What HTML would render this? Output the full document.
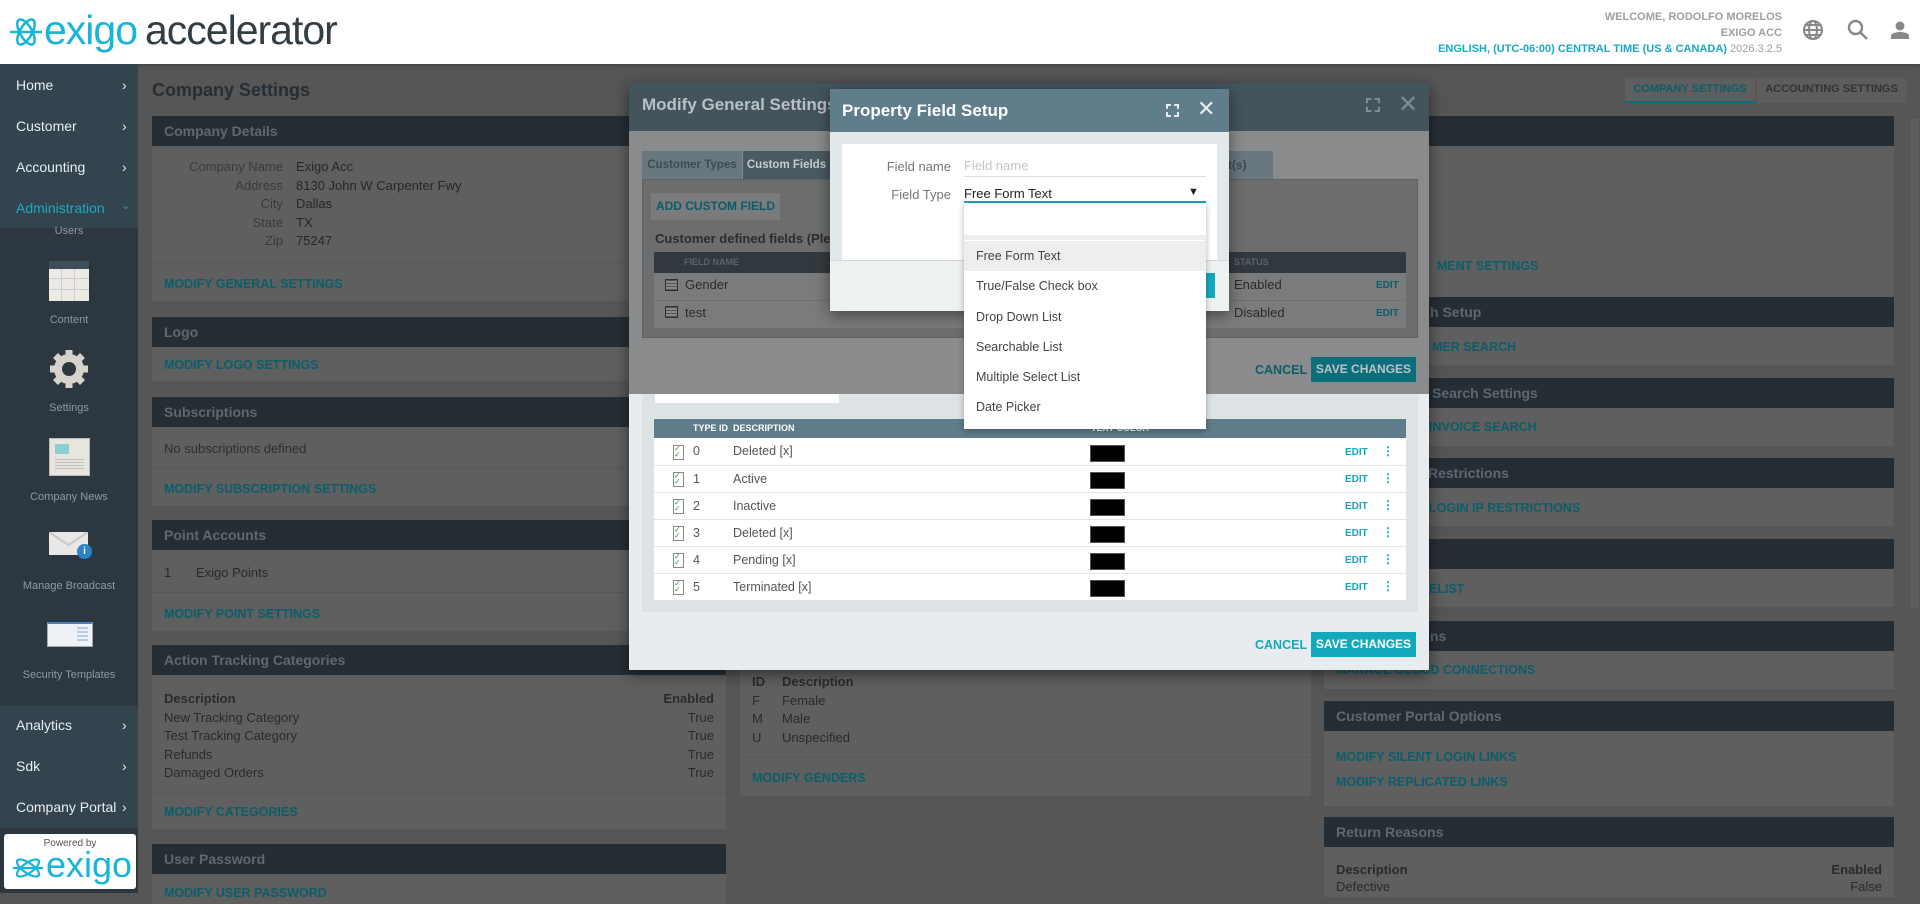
<!DOCTYPE html><html><head><meta charset="utf-8"><style>
*{box-sizing:border-box;margin:0;padding:0}
body{width:1920px;height:893px;overflow:hidden;position:relative;background:#565656;font-family:"Liberation Sans",sans-serif;font-size:13px;color:#2a2a2a}
.a{position:absolute}
.hdr{background:#262e35;color:#5d6870;font-size:14px;font-weight:bold;padding-left:12px;display:flex;align-items:center}
.pb{background:#5f5f5f}
.lk{color:#0b5e6a;font-weight:bold;font-size:12.5px}
.nav{color:#e8eef0;font-size:14px}
.sl{color:#8f9aa0;font-size:11px;text-align:center;width:138px;left:0}
.rowt td{height:27px;border-bottom:1px solid #e2e6e8;font-size:12.5px;color:#555}
</style></head><body>
<!-- header -->
<div class="a" style="left:0;top:0;width:1920px;height:64px;background:#fff;box-shadow:0 1px 3px rgba(0,0,0,.3)"></div>
<svg class="a" style="left:8px;top:14px" width="36" height="36" viewBox="0 0 36 36"><g fill="none" stroke="#19b5d8" stroke-width="2.5"><ellipse cx="18" cy="18" rx="14" ry="6" transform="rotate(60 18 18)"/><ellipse cx="18" cy="18" rx="14" ry="6" transform="rotate(-60 18 18)"/><path d="M2 18h32"/></g></svg>
<div class="a" style="left:44px;top:7px;font-size:41px;color:#19b5d8;letter-spacing:-1px">exigo</div>
<div class="a" style="left:145px;top:7px;font-size:41px;color:#333d44;letter-spacing:-1px">accelerator</div>
<div class="a" style="right:138px;top:9px;text-align:right;font-size:11px;font-weight:bold;color:#9aa0a4;line-height:16px">WELCOME, RODOLFO MORELOS<br>EXIGO ACC<br><span style="color:#19a7c4">ENGLISH, (UTC-06:00) CENTRAL TIME (US &amp; CANADA)</span> <span style="font-weight:normal">2026.3.2.5</span></div>
<svg class="a" style="left:1802px;top:19px" width="22" height="22" viewBox="0 0 22 22"><g fill="none" stroke="#888" stroke-width="2"><circle cx="11" cy="11" r="9"/><ellipse cx="11" cy="11" rx="4" ry="9"/><path d="M2 11h18M4 6h14M4 16h14"/></g></svg>
<svg class="a" style="left:1847px;top:19px" width="22" height="22" viewBox="0 0 22 22"><g fill="none" stroke="#888" stroke-width="2.4"><circle cx="8.5" cy="8.5" r="6.5"/><path d="M13 13l7 7"/></g></svg>
<svg class="a" style="left:1890px;top:20px" width="20" height="20" viewBox="0 0 20 20"><circle cx="10" cy="6" r="4.5" fill="#888"/><path d="M1 19v-3c0-3 6-4 9-4s9 1 9 4v3z" fill="#888"/></svg>

<!-- sidebar -->
<div class="a" style="left:0;top:64px;width:138px;height:829px;background:#2c3740"></div>
<div class="a" style="left:0;top:64px;width:138px;height:164px;background:#34444e"></div>
<div class="a" style="left:0;top:706px;width:138px;height:122px;background:#34444e"></div>
<div class="a nav" style="left:16px;top:77px">Home</div><div class="a nav" style="left:122px;top:77px">›</div>
<div class="a nav" style="left:16px;top:118px">Customer</div><div class="a nav" style="left:122px;top:118px">›</div>
<div class="a nav" style="left:16px;top:159px">Accounting</div><div class="a nav" style="left:122px;top:159px">›</div>
<div class="a nav" style="left:16px;top:200px;color:#1aa9c2">Administration</div><div class="a nav" style="left:121px;top:199px;color:#1aa9c2;font-size:11px">⌄</div>
<div class="a sl" style="top:225px">Users</div>
<div class="a" style="left:49px;top:261px;width:40px;height:40px;background:#eceae4;border-top:8px solid #3f4f5a;background-image:linear-gradient(90deg,transparent 12px,#cfccc4 12px,#cfccc4 13px,transparent 13px,transparent 25px,#cfccc4 25px,#cfccc4 26px,transparent 26px),linear-gradient(transparent 9px,#cfccc4 9px,#cfccc4 10px,transparent 10px,transparent 20px,#cfccc4 20px,#cfccc4 21px,transparent 21px)"></div>
<div class="a sl" style="top:314px">Content</div>
<svg class="a" style="left:47px;top:347px" width="44" height="44" viewBox="0 0 44 44"><g fill="#d6d3cc"><circle cx="22" cy="22" r="15"/><g stroke="#d6d3cc" stroke-width="7"><path d="M22 3v38M3 22h38M8.5 8.5l27 27M35.5 8.5l-27 27"/></g></g><circle cx="22" cy="22" r="7" fill="#2c3740"/></svg>
<div class="a sl" style="top:402px">Settings</div>
<div class="a" style="left:49px;top:438px;width:41px;height:38px;background:#e8e5de;border:1px solid #bbb"><div style="margin:5px;width:14px;height:10px;background:#8ccfd0"></div><div style="margin:0 5px;height:12px;background:repeating-linear-gradient(#c2c0ba 0 1px,transparent 1px 3px)"></div></div>
<div class="a sl" style="top:491px">Company News</div>
<div class="a" style="left:49px;top:532px;width:39px;height:23px;background:#e8e8e8"></div>
<svg class="a" style="left:49px;top:532px" width="39" height="23"><path d="M0 0l19.5 13L39 0" fill="none" stroke="#c8c8c8" stroke-width="2"/></svg>
<div class="a" style="left:77px;top:544px;width:15px;height:15px;border-radius:50%;background:#2b82c8;color:#fff;font-size:10px;font-weight:bold;text-align:center;line-height:15px">i</div>
<div class="a sl" style="top:580px">Manage Broadcast</div>
<div class="a" style="left:47px;top:622px;width:46px;height:25px;background:#eef1f5;border:1px solid #aaa;border-top:2px solid #4a7fc0"><div style="position:absolute;right:4px;top:3px;width:11px;height:16px;background:repeating-linear-gradient(#b5cce3 0 2px,transparent 2px 4px)"></div></div>
<div class="a sl" style="top:669px">Security Templates</div>
<div class="a nav" style="left:16px;top:717px">Analytics</div><div class="a nav" style="left:122px;top:717px">›</div>
<div class="a nav" style="left:16px;top:758px">Sdk</div><div class="a nav" style="left:122px;top:758px">›</div>
<div class="a nav" style="left:16px;top:799px">Company Portal</div><div class="a nav" style="left:122px;top:799px">›</div>
<div class="a" style="left:4px;top:834px;width:132px;height:55px;background:#fff;border-radius:3px"></div>
<div class="a" style="left:4px;top:838px;width:132px;text-align:center;font-size:10px;color:#555">Powered by</div>
<svg class="a" style="left:12px;top:854px" width="32" height="28" viewBox="0 0 32 28"><g fill="none" stroke="#19b5d8" stroke-width="2.2"><ellipse cx="16" cy="14" rx="13" ry="5" transform="rotate(35 16 14)"/><ellipse cx="16" cy="14" rx="13" ry="5" transform="rotate(-35 16 14)"/><path d="M1 14h30"/></g></svg>
<div class="a" style="left:46px;top:845px;font-size:36px;color:#19b5d8;line-height:40px">exigo</div>

<!-- main title -->
<div class="a" style="left:152px;top:80px;font-size:18px;font-weight:bold;color:#262e35">Company Settings</div>
<div class="a" style="left:1625px;top:78px;width:130px;height:25px;background:#5e5e5e;border-bottom:2px solid #0b6e7a;color:#0b5e6a;font-size:11px;font-weight:bold;text-align:center;line-height:23px">COMPANY SETTINGS</div>
<div class="a" style="left:1757px;top:78px;width:149px;height:25px;background:#5d5d5d;color:#2e3438;font-size:11px;font-weight:bold;text-align:center;line-height:23px">ACCOUNTING SETTINGS</div>
<div class="a" style="left:1910px;top:116px;width:10px;height:777px;background:#555"></div>
<div class="a" style="left:1911px;top:118px;width:8px;height:490px;background:#5e5e5e"></div>

<!-- left column -->
<div class="a pb" style="left:152px;top:116px;width:574px;height:185px"></div>
<div class="a hdr" style="left:152px;top:116px;width:574px;height:30px">Company Details</div>
<div class="a" style="left:152px;top:158px;width:131px;text-align:right;color:#3a3a3a;line-height:18.5px">Company Name<br>Address<br>City<br>State<br>Zip</div>
<div class="a" style="left:296px;top:158px;color:#262626;line-height:18.5px">Exigo Acc<br>8130 John W Carpenter Fwy<br>Dallas<br>TX<br>75247</div>
<div class="a" style="left:152px;top:262px;width:574px;height:1px;background:#585858"></div>
<div class="a lk" style="left:164px;top:277px">MODIFY GENERAL SETTINGS</div>

<div class="a pb" style="left:152px;top:317px;width:574px;height:64px"></div>
<div class="a hdr" style="left:152px;top:317px;width:574px;height:30px">Logo</div>
<div class="a lk" style="left:164px;top:358px">MODIFY LOGO SETTINGS</div>

<div class="a pb" style="left:152px;top:397px;width:574px;height:109px"></div>
<div class="a hdr" style="left:152px;top:397px;width:574px;height:30px">Subscriptions</div>
<div class="a" style="left:164px;top:441px;color:#2e2e2e">No subscriptions defined</div>
<div class="a" style="left:152px;top:468px;width:574px;height:1px;background:#585858"></div>
<div class="a lk" style="left:164px;top:482px">MODIFY SUBSCRIPTION SETTINGS</div>

<div class="a pb" style="left:152px;top:520px;width:574px;height:111px"></div>
<div class="a hdr" style="left:152px;top:520px;width:574px;height:30px">Point Accounts</div>
<div class="a" style="left:164px;top:565px">1</div><div class="a" style="left:196px;top:565px">Exigo Points</div>
<div class="a" style="left:152px;top:592px;width:574px;height:1px;background:#585858"></div>
<div class="a lk" style="left:164px;top:607px">MODIFY POINT SETTINGS</div>

<div class="a pb" style="left:152px;top:645px;width:574px;height:184px"></div>
<div class="a hdr" style="left:152px;top:645px;width:574px;height:30px">Action Tracking Categories</div>
<div class="a" style="left:164px;top:690px;line-height:18.5px;color:#2a2a2a"><b>Description</b><br>New Tracking Category<br>Test Tracking Category<br>Refunds<br>Damaged Orders</div>
<div class="a" style="left:600px;width:114px;top:690px;line-height:18.5px;text-align:right"><b>Enabled</b><br>True<br>True<br>True<br>True</div>
<div class="a" style="left:152px;top:793px;width:574px;height:1px;background:#585858"></div>
<div class="a lk" style="left:164px;top:805px">MODIFY CATEGORIES</div>

<div class="a pb" style="left:152px;top:844px;width:574px;height:60px"></div>
<div class="a hdr" style="left:152px;top:844px;width:574px;height:30px">User Password</div>
<div class="a lk" style="left:164px;top:886px">MODIFY USER PASSWORD</div>

<!-- middle column -->
<div class="a pb" style="left:740px;top:116px;width:571px;height:680px"></div>
<div class="a" style="left:752px;top:673px;line-height:18.5px"><b>ID</b><br>F<br>M<br>U</div>
<div class="a" style="left:782px;top:673px;line-height:18.5px"><b>Description</b><br>Female<br>Male<br>Unspecified</div>
<div class="a" style="left:740px;top:757px;width:571px;height:1px;background:#585858"></div>
<div class="a lk" style="left:752px;top:771px">MODIFY GENDERS</div>

<!-- right column -->
<div class="a pb" style="left:1324px;top:116px;width:570px;height:193px"></div>
<div class="a hdr" style="left:1324px;top:116px;width:570px;height:30px"></div>
<div class="a lk" style="left:1437px;top:259px">MENT SETTINGS</div>
<div class="a pb" style="left:1324px;top:297px;width:570px;height:68px"></div>
<div class="a hdr" style="left:1324px;top:297px;width:570px;height:30px;padding-left:106px">h Setup</div>
<div class="a lk" style="left:1432px;top:340px">MER SEARCH</div>
<div class="a pb" style="left:1324px;top:378px;width:570px;height:68px"></div>
<div class="a hdr" style="left:1324px;top:378px;width:570px;height:30px;padding-left:108px">Search Settings</div>
<div class="a lk" style="left:1429px;top:420px">INVOICE SEARCH</div>
<div class="a pb" style="left:1324px;top:458px;width:570px;height:68px"></div>
<div class="a hdr" style="left:1324px;top:458px;width:570px;height:30px;padding-left:104px">Restrictions</div>
<div class="a lk" style="left:1429px;top:501px">LOGIN IP RESTRICTIONS</div>
<div class="a pb" style="left:1324px;top:539px;width:570px;height:68px"></div>
<div class="a hdr" style="left:1324px;top:539px;width:570px;height:30px"></div>
<div class="a lk" style="left:1429px;top:582px">ELIST</div>
<div class="a pb" style="left:1324px;top:621px;width:570px;height:68px"></div>
<div class="a hdr" style="left:1324px;top:621px;width:570px;height:30px;padding-left:106px">ns</div>
<div class="a lk" style="left:1336px;top:663px">MANAGE CLOUD CONNECTIONS</div>
<div class="a pb" style="left:1324px;top:701px;width:570px;height:105px"></div>
<div class="a hdr" style="left:1324px;top:701px;width:570px;height:30px">Customer Portal Options</div>
<div class="a lk" style="left:1336px;top:750px">MODIFY SILENT LOGIN LINKS</div>
<div class="a lk" style="left:1336px;top:775px">MODIFY REPLICATED LINKS</div>
<div class="a pb" style="left:1324px;top:817px;width:570px;height:80px"></div>
<div class="a hdr" style="left:1324px;top:817px;width:570px;height:30px">Return Reasons</div>
<div class="a" style="left:1336px;top:861px;line-height:17px"><b>Description</b><br>Defective</div>
<div class="a" style="left:1780px;width:102px;top:861px;line-height:17px;text-align:right"><b>Enabled</b><br>False</div>

<!-- modal 1 -->
<div class="a" style="left:629px;top:83px;width:800px;height:587px;background:#e9ecee;box-shadow:0 4px 14px rgba(0,0,0,.5)"></div>
<div class="a" style="left:629px;top:83px;width:800px;height:311px;background:#8a8b8c"></div>
<div class="a" style="left:629px;top:83px;width:800px;height:48px;background:#43545c"></div>
<div class="a" style="left:642px;top:95px;font-size:17px;font-weight:bold;color:#b9c1c5">Modify General Settings</div>
<div class="a" style="left:1366px;top:98px;width:14px;height:14px;border:2px dashed #7e8c92"></div>
<div class="a" style="left:1398px;top:90px;font-size:24px;color:#7e8c92">✕</div>
<div class="a" style="left:642px;top:151px;width:100px;height:28px;background:#69777e;color:#3d4c54;font-size:11.5px;font-weight:bold;text-align:center;line-height:28px">Customer Types</div>
<div class="a" style="left:743px;top:151px;width:87px;height:28px;background:#4a5a62;color:#c6cdd0;font-size:11.5px;font-weight:bold;text-align:center;line-height:28px">Custom Fields</div>
<div class="a" style="left:1200px;top:151px;width:73px;height:28px;background:#69777e;color:#3d4c54;font-size:12px;font-weight:bold;line-height:28px;padding-left:10px">oint(s)</div>
<div class="a" style="left:642px;top:179px;width:776px;height:159px;background:#6c6d6e;border:1px solid #5f6162"></div>
<div class="a" style="left:651px;top:193px;width:129px;height:27px;background:#7a7b7c;color:#0b5d69;font-size:12px;font-weight:bold;text-align:center;line-height:27px">ADD CUSTOM FIELD</div>
<div class="a" style="left:655px;top:231px;font-weight:bold;color:#2c2c2c">Customer defined fields (Pleas</div>
<div class="a" style="left:654px;top:252px;width:752px;height:21px;background:#32393e;color:#5a6369;font-size:9px;font-weight:bold;line-height:21px;padding-left:30px">FIELD NAME<span style="position:absolute;left:580px">STATUS</span></div>
<div class="a" style="left:654px;top:273px;width:752px;height:55px;background:#7a7b7c"></div>
<div class="a" style="left:654px;top:300px;width:752px;height:1px;background:#6f7071"></div>
<div class="a" style="left:665px;top:279px;width:13px;height:12px;border:1px solid #333;background:repeating-linear-gradient(#555 0 1px,#888 1px 3px)"></div>
<div class="a" style="left:665px;top:306px;width:13px;height:12px;border:1px solid #333;background:repeating-linear-gradient(#555 0 1px,#888 1px 3px)"></div>
<div class="a" style="left:685px;top:277px;color:#2a2a2a">Gender</div>
<div class="a" style="left:685px;top:305px;color:#2a2a2a">test</div>
<div class="a" style="left:1234px;top:277px;color:#2a2a2a">Enabled</div>
<div class="a" style="left:1234px;top:305px;color:#2a2a2a">Disabled</div>
<div class="a lk" style="left:1376px;top:280px;font-size:10px">EDIT</div>
<div class="a lk" style="left:1376px;top:308px;font-size:10px">EDIT</div>
<div class="a lk" style="left:1255px;top:363px">CANCEL</div>
<div class="a" style="left:1311px;top:357px;width:105px;height:25px;background:#0d6e7b;color:#b8c4c8;font-size:12px;font-weight:bold;text-align:center;line-height:25px">SAVE CHANGES</div>
<!-- lower bright -->
<div class="a" style="left:642px;top:394px;width:776px;height:218px;background:#dde2e5"></div>
<div class="a" style="left:655px;top:394px;width:184px;height:9px;background:#fff"></div>
<div class="a" style="left:654px;top:419px;width:752px;height:182px;background:#fff"></div>
<div class="a" style="left:654px;top:419px;width:752px;height:19px;background:#5e7c89;color:#fff;font-size:9px;font-weight:bold;line-height:19px"><span style="position:absolute;left:39px">TYPE ID</span><span style="position:absolute;left:79px">DESCRIPTION</span><span style="position:absolute;left:437px">TEXT COLOR</span></div>
<div class="a" style="left:654px;top:438px;width:752px">
<table style="width:752px;border-collapse:collapse" class="rowt">
<tr><td style="width:39px"></td><td style="width:40px">0</td><td style="width:358px">Deleted [x]</td><td></td></tr>
<tr><td></td><td>1</td><td>Active</td><td></td></tr>
<tr><td></td><td>2</td><td>Inactive</td><td></td></tr>
<tr><td></td><td>3</td><td>Deleted [x]</td><td></td></tr>
<tr><td></td><td>4</td><td>Pending [x]</td><td></td></tr>
<tr><td></td><td>5</td><td>Terminated [x]</td><td></td></tr></table></div>
<div class="a" style="left:673px;top:445px">
<div style="width:11px;height:15px;border:1px solid #888;background:#fff;margin-bottom:12px;color:#2a9a3a;font-size:8px;line-height:6px">✓<br>✓</div><div style="width:11px;height:15px;border:1px solid #888;margin-bottom:12px;color:#2a9a3a;font-size:8px;line-height:6px">✓<br>✓</div><div style="width:11px;height:15px;border:1px solid #888;margin-bottom:12px;color:#2a9a3a;font-size:8px;line-height:6px">✓<br>✓</div><div style="width:11px;height:15px;border:1px solid #888;margin-bottom:12px;color:#2a9a3a;font-size:8px;line-height:6px">✓<br>✓</div><div style="width:11px;height:15px;border:1px solid #888;margin-bottom:12px;color:#2a9a3a;font-size:8px;line-height:6px">✓<br>✓</div><div style="width:11px;height:15px;border:1px solid #888;color:#2a9a3a;font-size:8px;line-height:6px">✓<br>✓</div></div>
<div class="a" style="left:1090px;top:445px">
<div style="width:35px;height:17px;background:#000;border:1px solid #555;margin-bottom:10px"></div><div style="width:35px;height:17px;background:#000;border:1px solid #555;margin-bottom:10px"></div><div style="width:35px;height:17px;background:#000;border:1px solid #555;margin-bottom:10px"></div><div style="width:35px;height:17px;background:#000;border:1px solid #555;margin-bottom:10px"></div><div style="width:35px;height:17px;background:#000;border:1px solid #555;margin-bottom:10px"></div><div style="width:35px;height:17px;background:#000;border:1px solid #555"></div></div>
<div class="a" style="left:1345px;top:439px;color:#13a7bd;font-size:10px;font-weight:bold;line-height:27px">EDIT<br>EDIT<br>EDIT<br>EDIT<br>EDIT<br>EDIT</div>
<div class="a" style="left:1382px;top:438px;color:#13a7bd;font-size:12px;font-weight:bold;line-height:27px">⋮<br>⋮<br>⋮<br>⋮<br>⋮<br>⋮</div>
<div class="a" style="left:1255px;top:638px;color:#13a7bd;font-weight:bold;font-size:12.5px">CANCEL</div>
<div class="a" style="left:1311px;top:632px;width:105px;height:25px;background:#13a9bd;color:#fff;font-size:12px;font-weight:bold;text-align:center;line-height:25px">SAVE CHANGES</div>

<!-- modal 2 -->
<div class="a" style="left:830px;top:89px;width:399px;height:222px;background:#e3e8ea;box-shadow:0 4px 14px rgba(0,0,0,.45)"></div>
<div class="a" style="left:830px;top:89px;width:399px;height:43px;background:#607d8b"></div>
<div class="a" style="left:842px;top:101px;font-size:17px;font-weight:bold;color:#fff">Property Field Setup</div>
<div class="a" style="left:1166px;top:104px;width:13px;height:13px;border:2px dashed #e8eef0"></div>
<div class="a" style="left:1197px;top:96px;font-size:22px;color:#e8eef0">✕</div>
<div class="a" style="left:842px;top:144px;width:375px;height:116px;background:#fff"></div>
<div class="a" style="left:830px;top:260px;width:399px;height:51px;background:#eef1f2;border-top:1px solid #d4d9dc"></div>
<div class="a" style="left:1205px;top:273px;width:10px;height:25px;background:#13a9bd"></div>
<div class="a" style="left:842px;top:159px;width:109px;text-align:right;color:#777">Field name</div>
<div class="a" style="left:964px;top:158px;color:#c4c4c4">Field name</div>
<div class="a" style="left:964px;top:176px;width:242px;height:1px;background:#ddd"></div>
<div class="a" style="left:842px;top:187px;width:109px;text-align:right;color:#777">Field Type</div>
<div class="a" style="left:964px;top:186px;color:#222">Free Form Text</div>
<div class="a" style="left:1188px;top:186px;font-size:11px;color:#222">▼</div>
<div class="a" style="left:964px;top:201px;width:242px;height:2px;background:#13a9bd"></div>
<!-- dropdown -->
<div class="a" style="left:964px;top:203px;width:242px;height:226px;background:#fff;box-shadow:0 2px 6px rgba(0,0,0,.3)"></div>
<div class="a" style="left:964px;top:235px;width:242px;height:5px;background:#eee"></div>
<div class="a" style="left:964px;top:241px;width:242px;height:30px;background:#eeeeee"></div>
<div class="a" style="left:976px;top:241px;color:#444;font-size:12.5px;line-height:30.3px">Free Form Text<br>True/False Check box<br>Drop Down List<br>Searchable List<br>Multiple Select List<br>Date Picker</div>
</body></html>
